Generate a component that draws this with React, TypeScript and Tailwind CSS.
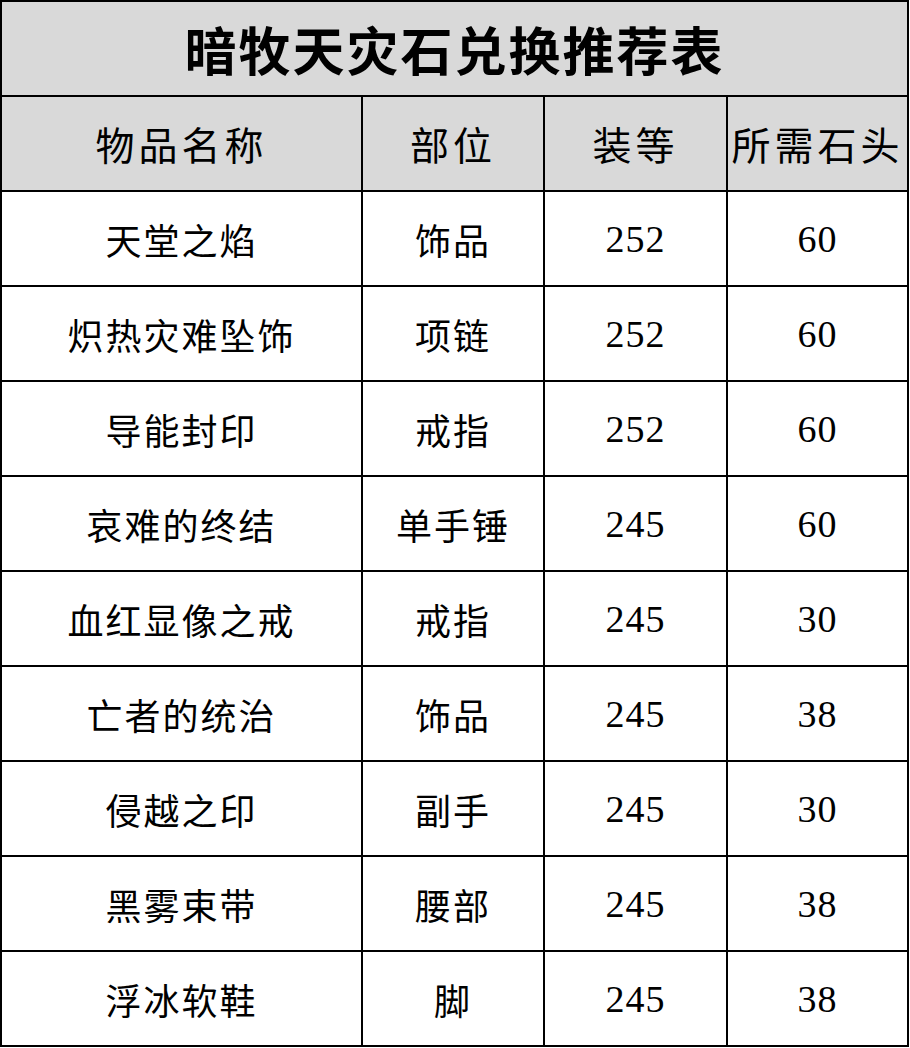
const rows = [
  ["天堂之焰", "饰品", "252", "60"],
  ["炽热灾难坠饰", "项链", "252", "60"],
  ["导能封印", "戒指", "252", "60"],
  ["哀难的终结", "单手锤", "245", "60"],
  ["血红显像之戒", "戒指", "245", "30"],
  ["亡者的统治", "饰品", "245", "38"],
  ["侵越之印", "副手", "245", "30"],
  ["黑雾束带", "腰部", "245", "38"],
  ["浮冰软鞋", "脚", "245", "38"],
];

export default function App() {
  return (
    <div className="w-[910px] h-[1048px] bg-white font-['Noto_Sans_CJK_SC',sans-serif]">
      <table className="w-[909px] border-collapse table-fixed text-black">
        <colgroup>
          <col className="w-[361px]" />
          <col className="w-[182px]" />
          <col className="w-[183px]" />
          <col />
        </colgroup>
        <thead>
          <tr className="h-[95px] bg-[#d9d9d9]">
            <th
              colSpan={4}
              className="border-2 border-black text-[52px] font-bold tracking-[2px] text-center leading-none"
            >
              暗牧天灾石兑换推荐表
            </th>
          </tr>
          <tr className="h-[95px] bg-[#d9d9d9]">
            {["物品名称", "部位", "装等", "所需石头"].map((h) => (
              <th
                key={h}
                className="border-2 border-black text-[39px] font-normal tracking-[4px] text-center leading-none whitespace-nowrap"
              >
                {h}
              </th>
            ))}
          </tr>
        </thead>
        <tbody>
          {rows.map((r) => (
            <tr key={r[0]} className="h-[95px]">
              {r.map((c, i) => (
                <td
                  key={i}
                  className={
                    i < 2
                      ? "border-2 border-black text-center text-[36px] tracking-[2px] leading-none whitespace-nowrap"
                      : "border-2 border-black text-center text-[38px] tracking-[1px] leading-none whitespace-nowrap font-['Liberation_Serif',serif]"
                  }
                >
                  {c}
                </td>
              ))}
            </tr>
          ))}
        </tbody>
      </table>
    </div>
  );
}
